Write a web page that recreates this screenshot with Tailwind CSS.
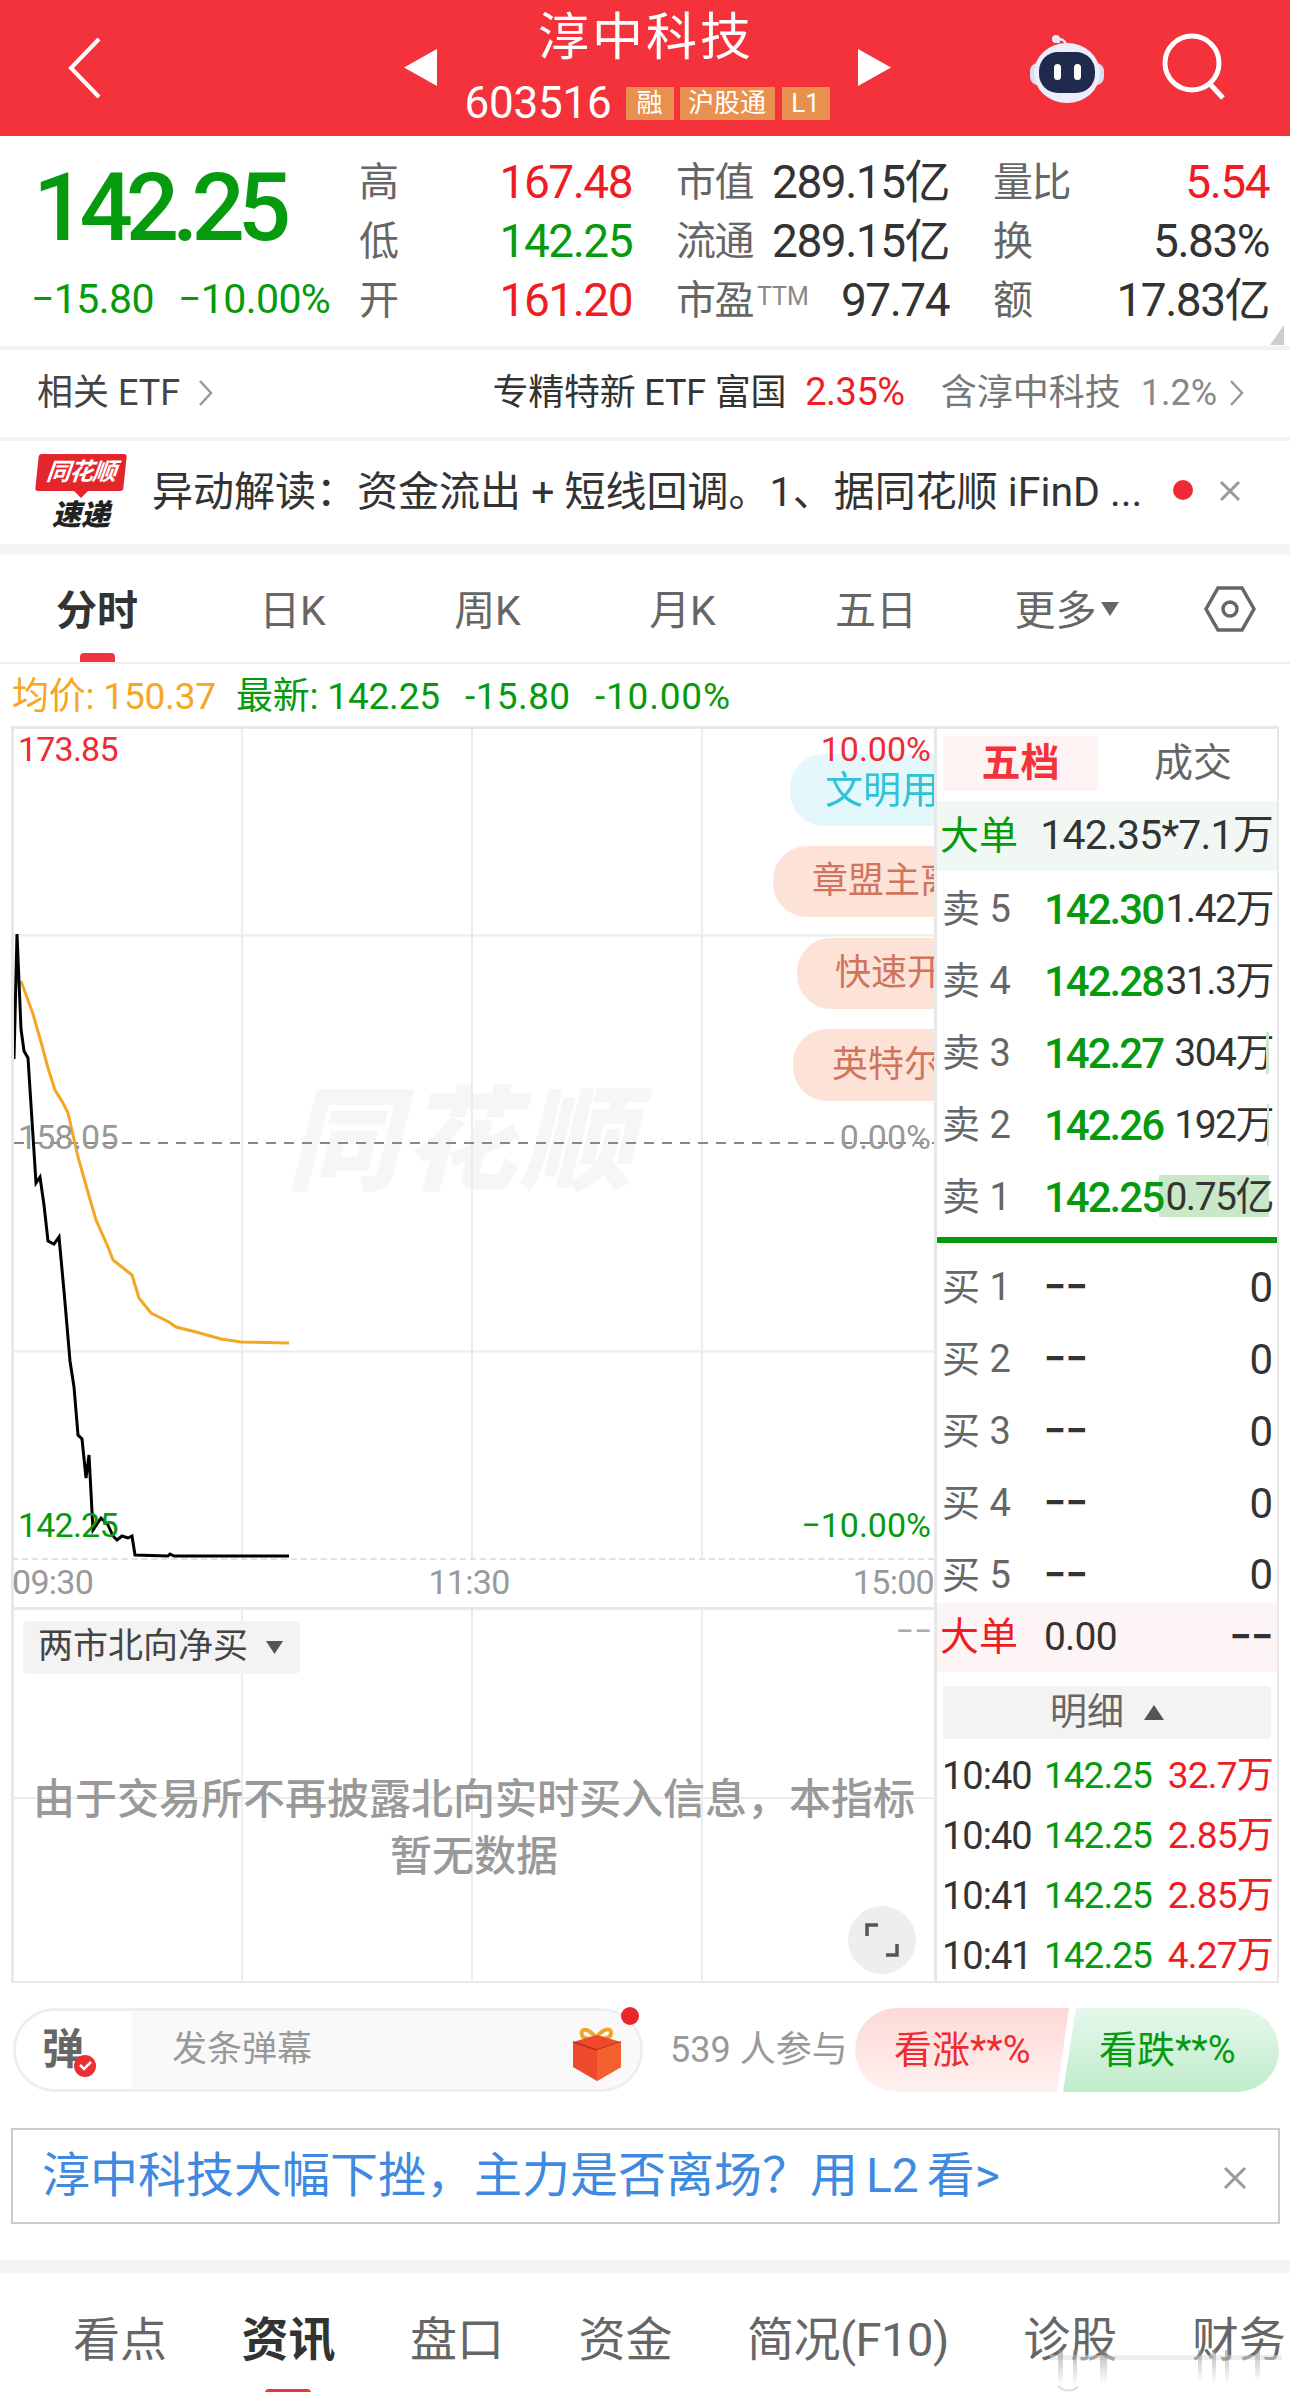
<!DOCTYPE html>
<html lang="zh">
<head>
    <meta charset="UTF-8">
    <meta name="viewport" content="width=device-width, initial-scale=1.0">
    <title>淳中科技</title>
    <script src="https://cdn.jsdelivr.net/npm/@tailwindcss/browser@4"></script>
</head>
<body class="relative w-[1290px] h-[2405px] overflow-hidden bg-white text-[#333] font-['Roboto','Noto_Sans_CJK_SC',sans-serif]">

    <!-- 顶栏 -->
    <header class="relative h-[136px] bg-[#f4323c] text-white flex items-center justify-between pl-[66px] pr-[66px]">
        <svg class="w-[36px] h-[62px]" viewBox="0 0 36 62" fill="none" stroke="#fff" stroke-width="4"><path d="M33 2 L5 31 L33 60"/></svg>
        <div class="absolute left-[404px] w-[487px] top-[8px] flex flex-col items-center">
            <div class="text-[51px] leading-[60px] tracking-[3px] -ml-[3px]">淳中科技</div>
            <div class="flex items-center h-[40px] mt-[15px] -ml-[1px]">
                <span class="text-[44px] leading-[40px] mr-[14px] tracking-[-0.2px]">603516</span>
                <span class="h-[33px] w-[48px] bg-[#e8914e] text-[26px] leading-[33px] text-center mr-[6px]">融</span>
                <span class="h-[33px] w-[95px] bg-[#e8914e] text-[26px] leading-[33px] text-center mr-[7px]">沪股通</span>
                <span class="h-[33px] w-[48px] bg-[#e8914e] text-[26px] leading-[33px] text-center">L1</span>
            </div>
            <svg class="absolute left-0 top-[41px] w-[33px] h-[37px]" viewBox="0 0 33 37" fill="#fff"><path d="M33 0V37L0 18.5Z"/></svg>
            <svg class="absolute right-0 top-[41px] w-[33px] h-[37px]" viewBox="0 0 33 37" fill="#fff"><path d="M0 0V37L33 18.5Z"/></svg>
        </div>
        <div class="flex items-center gap-[57px] -mr-[4px]">
            <svg class="w-[76px] h-[70px] -ml-[6px]" viewBox="0 0 76 70">
                <path d="M29 10 C30 5 34 5 37 11" fill="none" stroke="#e7e9f8" stroke-width="2.5"/>
                <circle cx="27" cy="6" r="4" fill="#e7e9f8"/>
                <rect x="1" y="30" width="74" height="22" rx="8" fill="#d9dcf3"/>
                <ellipse cx="38" cy="40" rx="33" ry="30" fill="#eceefb"/>
                <rect x="10" y="19" width="56" height="41" rx="19" fill="#1f2a4d"/>
                <rect x="25" y="31" width="7" height="16" rx="3.5" fill="#fff"/>
                <rect x="45" y="31" width="7" height="16" rx="3.5" fill="#fff"/>
            </svg>
            <svg class="w-[66px] h-[72px]" viewBox="0 0 66 72" fill="none" stroke="#fff" stroke-width="5"><circle cx="30" cy="31" r="27"/><path d="M48 52 L61 66"/></svg>
        </div>
    </header>

    <!-- 行情 -->
    <section class="relative h-[210px] flex">
        <div class="w-[359px] shrink-0 pl-[33px]">
            <div class="text-[#069a0e] text-[94px] leading-[88px] font-medium tracking-[-7px] mt-[28px]">142.25</div>
            <div class="flex text-[#069a0e] text-[41px] leading-[44px] mt-[25px] -ml-[2px] tracking-[-0.6px]">
                <span class="w-[147px]">−15.80</span><span>−10.00%</span>
            </div>
        </div>
        <div class="grid grid-cols-[273px_273px_276px] gap-x-[44px] grid-rows-[59px_59px_59px] text-[46px] tracking-[-1.5px] mt-[17px] leading-[59px]">
            <div class="flex justify-between"><span class="text-[40px] text-[#666]">高</span><span class="text-[#ef1c24]">167.48</span></div>
            <div class="flex justify-between"><span class="text-[40px] text-[#666]">市值</span><span>289.15亿</span></div>
            <div class="flex justify-between"><span class="text-[40px] text-[#666]">量比</span><span class="text-[#ef1c24]">5.54</span></div>
            <div class="flex justify-between"><span class="text-[40px] text-[#666]">低</span><span class="text-[#069a0e]">142.25</span></div>
            <div class="flex justify-between"><span class="text-[40px] text-[#666]">流通</span><span>289.15亿</span></div>
            <div class="flex justify-between"><span class="text-[40px] text-[#666]">换</span><span>5.83%</span></div>
            <div class="flex justify-between"><span class="text-[40px] text-[#666]">开</span><span class="text-[#ef1c24]">161.20</span></div>
            <div class="flex justify-between"><span class="text-[40px] text-[#666]">市盈<span class="text-[25px] text-[#888] align-[9px] ml-[4px] leading-none tracking-[0px]">TTM</span></span><span>97.74</span></div>
            <div class="flex justify-between"><span class="text-[40px] text-[#666]">额</span><span>17.83亿</span></div>
        </div>
        <svg class="absolute right-[6px] bottom-[1px] w-[14px] h-[20px]" viewBox="0 0 14 20" fill="#ccc"><path d="M14 0V20H0Z"/></svg>
    </section>

    <!-- 相关ETF -->
    <section class="h-[91px] border-t-4 border-[#f2f2f2] flex items-center pl-[37px] pr-[46px] text-[36px] pb-[2px]">
        <span class="text-[#444]">相关 ETF</span>
        <svg class="ml-[18px] w-[15px] h-[28px]" viewBox="0 0 15 28" fill="none" stroke="#999" stroke-width="2.5"><path d="M2 2 L13 14 L2 26"/></svg>
        <span class="ml-auto text-[#333] tracking-[-0.2px]">专精特新 ETF 富国</span>
        <span class="ml-[19px] text-[#ef1c24] text-[38px] tracking-[-0.5px]">2.35%</span>
        <span class="ml-[36px] text-[#777]">含淳中科技</span>
        <span class="ml-[20px] text-[#888]">1.2%</span>
        <svg class="ml-[12px] w-[15px] h-[28px]" viewBox="0 0 15 28" fill="none" stroke="#999" stroke-width="2.5"><path d="M2 2 L13 14 L2 26"/></svg>
    </section>

    <!-- 异动解读 -->
    <section class="h-[107px] border-t-4 border-[#f2f2f2] flex items-center pl-[37px] relative">
        <div class="w-[88px] h-[78px] relative shrink-0">
            <div class="h-[37px] bg-[#e3262c] rounded-[3px] -skew-x-6 text-white text-[24px] leading-[37px] font-bold italic text-center tracking-[-1px]">同花顺</div>
            <div class="absolute left-[36px] top-[36px] w-0 h-0 border-l-[8px] border-r-[8px] border-t-[8px] border-l-transparent border-r-transparent border-t-[#e3262c]"></div>
            <div class="text-[29px] leading-[36px] mt-[6px] font-black italic text-[#222] text-center">速递</div>
        </div>
        <div class="ml-[27px] text-[41px] text-[#333] whitespace-nowrap">异动解读：资金流出 + 短线回调。1、据同花顺 iFinD<span class="ml-[10px]">...</span></div>
        <div class="absolute left-[1173px] top-[39px] w-[20px] h-[20px] rounded-full bg-[#ef2b33]"></div>
        <svg class="absolute left-[1219px] top-[39px] w-[22px] h-[22px]" viewBox="0 0 22 22" fill="none" stroke="#999" stroke-width="3"><path d="M2 2L20 20M20 2L2 20"/></svg>
    </section>

    <!-- 分时 tabs -->
    <nav class="h-[120px] border-t-[11px] border-[#f5f5f5] border-b-2 border-b-[#eee] flex relative text-[41px] text-[#666] pt-[25px]">
        <div class="w-[194px] text-center font-bold text-[#333] leading-[62px]">分时</div>
        <div class="w-[197px] text-center leading-[62px]">日K</div>
        <div class="w-[193px] text-center leading-[62px]">周K</div>
        <div class="w-[197px] text-center leading-[62px]">月K</div>
        <div class="w-[190px] text-center leading-[62px]">五日</div>
        <div class="w-[191px] h-[62px] leading-[62px] flex items-center justify-center">更多<svg class="w-[18px] h-[14px] ml-[4px] mb-[4px]" viewBox="0 0 18 14" fill="#666"><path d="M0 0H18L9 14Z"/></svg></div>
        <svg class="absolute left-[1204px] top-[30px] w-[52px] h-[48px]" viewBox="0 0 52 48" fill="none" stroke="#666" stroke-width="3.5"><path d="M14 3H38L50 24L38 45H14L2 24Z"/><circle cx="26" cy="24" r="7"/></svg>
        <div class="absolute left-[80px] bottom-0 w-[35px] h-[9px] bg-[#f4323c] rounded-t-[4px]"></div>
    </nav>

    <!-- 均价 -->
    <div class="h-[62px] flex items-center pl-[12px] pt-[4px] text-[37px] text-[#069a0e] whitespace-nowrap tracking-[-0.2px]">
        <span class="text-[#f5a623] w-[224px]">均价: 150.37</span>
        <span class="w-[229px]">最新: 142.25</span>
        <span class="w-[130px] tracking-[0.4px]">-15.80</span>
        <span class="tracking-[0.8px]">-10.00%</span>
    </div>

    <!-- 图表 + 盘口 -->
    <main class="ml-[11px] w-[1268px] h-[1257px] flex border-t-[3px] border-b-2 border-[#e8e8e8] border-r-2">
        <div class="w-[923px] shrink-0 flex flex-col border-l-[3px] border-[#e8e8e8]">
            <div class="relative h-[829px] overflow-hidden">
                <div class="absolute left-[272px] top-[349px] text-[113px] leading-[130px] font-black italic text-[#f6f6f6] tracking-[4px] whitespace-nowrap">同花顺</div>
                <svg class="absolute left-0 top-0" width="923" height="829" viewBox="13 728 923 829" fill="none">
                    <path d="M241 728V1557M471 728V1557M701 728V1557M13 934.5H934M13 1350.5H934" stroke="#ececec" stroke-width="2"/>
                    <path d="M13 1142H934" stroke="#888" stroke-width="2" stroke-dasharray="10 8"/>
                    <polyline stroke="#f5a623" stroke-width="3" points="20,980 32,1013 40,1041 47,1067 54,1089 62,1102 67,1112 77,1156 88,1195 95,1219 107,1246 112,1259 131,1274 138,1297 150,1312 168,1321 175,1326 195,1331 220,1338 240,1341 288,1342"/>
                    <polyline stroke="#000" stroke-width="3" points="13,1058 16,933 20,1028 23,1050 27,1057 30,1104 35,1182 39,1176 43,1204 47,1240 53,1243 58,1236 63,1290 69,1360 73,1386 77,1434 81,1438 85,1477 88,1454 92,1529 100,1517 107,1524 112,1535 116,1539 121,1535 127,1537 131,1535 134,1554 167,1555 169,1553 173,1555 288,1555"/>
                </svg>
                <div class="absolute left-[4px] top-[1px] text-[34px] leading-[38px] text-[#ef2b33] tracking-[-0.8px]">173.85</div>
                <div class="absolute right-[3px] top-[1px] text-[34px] leading-[38px] text-[#ef2b33] z-10">10.00%</div>
                <div class="absolute left-[4px] top-[389px] text-[34px] leading-[38px] text-[#999] tracking-[-0.8px]">158.05</div>
                <div class="absolute right-[3px] top-[389px] text-[34px] leading-[38px] text-[#999]">0.00%</div>
                <div class="absolute left-[4px] top-[777px] text-[34px] leading-[38px] text-[#069a0e] tracking-[-0.8px]">142.25</div>
                <div class="absolute right-[3px] top-[777px] text-[34px] leading-[38px] text-[#069a0e]">−10.00%</div>
                <div class="absolute left-[776px] top-[25px] w-[160px] h-[72px] bg-[#e4f8fb] rounded-l-[34px] pl-[35px] text-[38px] leading-[72px] text-[#2cc3d8] whitespace-nowrap overflow-hidden">文明用语</div>
                <div class="absolute left-[759px] top-[117px] w-[175px] h-[71px] bg-[#fde3d7] rounded-l-[34px] pl-[39px] text-[36px] leading-[71px] text-[#d0755c] whitespace-nowrap overflow-hidden">章盟主离场</div>
                <div class="absolute left-[783px] top-[209px] w-[151px] h-[71px] bg-[#fde3d7] rounded-l-[34px] pl-[38px] text-[36px] leading-[71px] text-[#d0755c] whitespace-nowrap overflow-hidden">快速开板</div>
                <div class="absolute left-[779px] top-[300px] w-[155px] h-[72px] bg-[#fde3d7] rounded-l-[34px] pl-[39px] text-[36px] leading-[72px] text-[#d0755c] whitespace-nowrap overflow-hidden">英特尔的</div>
            </div>
            <div class="h-[49px] border-t-2 border-dashed border-[#e3e3d8] flex justify-between items-center text-[34px] text-[#999] tracking-[-0.7px] -ml-[2px] pb-[3px]">
                <span>09:30</span><span class="-ml-[8px]">11:30</span><span>15:00</span>
            </div>
            <div class="relative flex-1 border-t-[3px] border-[#e8e8e8] overflow-hidden">
                <svg class="absolute left-0 top-0" width="923" height="375" viewBox="13 1607 923 375" fill="none">
                    <path d="M241 1607V1982M471 1607V1982M701 1607V1982M13 1795H934" stroke="#ececec" stroke-width="2"/>
                </svg>
                <div class="absolute left-[9px] top-[11px] h-[53px] w-[277px] bg-[#f3f3f3] rounded-[5px] flex items-center pl-[15px] text-[35px] text-[#444]">两市北向净买<svg class="ml-[18px] w-[17px] h-[13px]" viewBox="0 0 17 13" fill="#555"><path d="M0 0H17L8.5 13Z"/></svg></div>
                <div class="absolute right-[2px] top-[2px] text-[32px] leading-[38px] text-[#aaa]">−−</div>
                <div class="absolute left-0 right-0 top-[161px] text-center text-[42px] leading-[57px] text-[#999] font-medium whitespace-nowrap">由于交易所不再披露北向实时买入信息，本指标<br>暂无数据</div>
                <div class="absolute left-[834px] top-[296px] w-[68px] h-[68px] rounded-full bg-[#eee] flex items-center justify-center">
                    <svg class="w-[34px] h-[34px]" viewBox="0 0 34 34" fill="none" stroke="#555" stroke-width="3.5"><path d="M2 13V2H13M32 21V32H21"/></svg>
                </div>
            </div>
        </div>

        <!-- 五档 -->
        <aside class="flex-1 border-l-[3px] border-[#e8e8e8] overflow-hidden text-[39px] whitespace-nowrap">
            <div class="h-[55px] mt-[7px] flex items-center">
                <div class="ml-[6px] w-[155px] shrink-0 h-[55px] bg-[#fdf3f2] rounded-[4px] text-center leading-[55px] font-bold text-[#f4323c]">五档</div>
                <div class="w-[190px] shrink-0 text-center text-[#666]">成交</div>
            </div>
            <div class="h-[70px] mt-[10px] bg-[#f1f8f3] flex items-center pl-[3px] pr-[4px]"><span class="w-[104px] text-[#069a0e]">大单</span><span class="ml-auto tracking-[-0.8px] text-[#333] text-[41px]">142.35*7.1万</span></div>
            <div class="h-[72px] mt-[2px] flex items-center pl-[5px] pr-[4px]"><span class="w-[102px] text-[38px] text-[#666]">卖 5</span><span class="text-[#069a0e] text-[42px] font-medium tracking-[-2px]">142.30</span><span class="ml-auto tracking-[-1.5px] text-[#333]">1.42万</span></div>
            <div class="h-[72px] flex items-center pl-[5px] pr-[4px]"><span class="w-[102px] text-[38px] text-[#666]">卖 4</span><span class="text-[#069a0e] text-[42px] font-medium tracking-[-2px]">142.28</span><span class="ml-auto tracking-[-1.5px] text-[#333]">31.3万</span></div>
            <div class="h-[72px] flex items-center pl-[5px] pr-[4px] relative"><span class="w-[102px] text-[38px] text-[#666]">卖 3</span><span class="text-[#069a0e] text-[42px] font-medium tracking-[-2px]">142.27</span><span class="ml-auto tracking-[-1.5px] text-[#333]">304万</span><div class="absolute right-[8px] top-[15px] w-[3px] h-[42px] bg-[#c8e8c8]"></div></div>
            <div class="h-[72px] flex items-center pl-[5px] pr-[4px] relative"><span class="w-[102px] text-[38px] text-[#666]">卖 2</span><span class="text-[#069a0e] text-[42px] font-medium tracking-[-2px]">142.26</span><span class="ml-auto tracking-[-1.5px] text-[#333]">192万</span><div class="absolute right-[8px] top-[15px] w-[2px] h-[42px] bg-[#c8e8c8]"></div></div>
            <div class="h-[72px] flex items-center pl-[5px] pr-[4px] relative"><span class="w-[102px] text-[38px] text-[#666]">卖 1</span><span class="text-[#069a0e] text-[42px] font-medium tracking-[-2px] relative z-10">142.25</span><span class="ml-auto tracking-[-1.5px] text-[#333] relative z-10">0.75亿</span><div class="absolute right-[8px] top-[14px] w-[110px] h-[42px] bg-[#c8e8c8]"></div></div>
            <div class="h-[6px] mt-[4px] bg-[#069a0e]"></div>
            <div class="h-[72px] mt-[8px] flex items-center pl-[5px] pr-[4px]"><span class="w-[102px] text-[38px] text-[#666]">买 1</span><span class="font-bold">−−</span><span class="ml-auto text-[42px]">0</span></div>
            <div class="h-[72px] flex items-center pl-[5px] pr-[4px]"><span class="w-[102px] text-[38px] text-[#666]">买 2</span><span class="font-bold">−−</span><span class="ml-auto text-[42px]">0</span></div>
            <div class="h-[72px] flex items-center pl-[5px] pr-[4px]"><span class="w-[102px] text-[38px] text-[#666]">买 3</span><span class="font-bold">−−</span><span class="ml-auto text-[42px]">0</span></div>
            <div class="h-[72px] flex items-center pl-[5px] pr-[4px]"><span class="w-[102px] text-[38px] text-[#666]">买 4</span><span class="font-bold">−−</span><span class="ml-auto text-[42px]">0</span></div>
            <div class="h-[64px] flex items-start pl-[5px] pr-[4px] leading-[72px]"><span class="w-[102px] text-[38px] text-[#666]">买 5</span><span class="font-bold">−−</span><span class="ml-auto text-[42px]">0</span></div>
            <div class="h-[69px] bg-[#fdf5f5] flex items-center pl-[3px] pr-[4px]"><span class="w-[104px] text-[#ef1c24]">大单</span><span class="tracking-[-0.8px]">0.00</span><span class="ml-auto font-bold">−−</span></div>
            <div class="h-[53px] mt-[14px] mx-[6px] bg-[#f3f3f3] rounded-[3px] flex items-center justify-center text-[37px] text-[#666]">明细<svg class="ml-[20px] w-[20px] h-[15px]" viewBox="0 0 20 15" fill="#555"><path d="M0 15H20L10 0Z"/></svg></div>
            <div class="h-[60px] mt-[7px] flex items-center pl-[5px] pr-[4px] text-[37px] tracking-[-0.8px]"><span class="w-[102px] text-[38px] tracking-[-1px]">10:40</span><span class="text-[#069a0e] tracking-[-1px]">142.25</span><span class="ml-auto text-[#ef1c24]">32.7万</span></div>
            <div class="h-[60px] flex items-center pl-[5px] pr-[4px] text-[37px] tracking-[-0.8px]"><span class="w-[102px] text-[38px] tracking-[-1px]">10:40</span><span class="text-[#069a0e] tracking-[-1px]">142.25</span><span class="ml-auto text-[#ef1c24]">2.85万</span></div>
            <div class="h-[60px] flex items-center pl-[5px] pr-[4px] text-[37px] tracking-[-0.8px]"><span class="w-[102px] text-[38px] tracking-[-1px]">10:41</span><span class="text-[#069a0e] tracking-[-1px]">142.25</span><span class="ml-auto text-[#ef1c24]">2.85万</span></div>
            <div class="h-[60px] flex items-center pl-[5px] pr-[4px] text-[37px] tracking-[-0.8px]"><span class="w-[102px] text-[38px] tracking-[-1px]">10:41</span><span class="text-[#069a0e] tracking-[-1px]">142.25</span><span class="ml-auto text-[#ef1c24]">4.27万</span></div>
        </aside>
    </main>

    <!-- 弹幕 -->
    <section class="h-[84px] mt-[25px] flex items-center relative">
        <div class="ml-[13px] w-[630px] h-[84px] border-[3px] border-[#eee] rounded-full overflow-hidden flex relative">
            <div class="w-[116px] shrink-0 bg-white pl-[26px] text-[42px] font-bold text-[#666] leading-[78px]">弹</div>
            <div class="flex-1 bg-[#f9f9f9] pl-[40px] text-[35px] text-[#999] leading-[78px]">发条弹幕</div>
            <svg class="absolute left-[556px] top-[16px] w-[50px] h-[54px]" viewBox="0 0 50 54">
                <path d="M24 11C16 0 8 1 10 8C11 12 18 12 24 11C31 1 40 0 39 7C38 12 30 12 24 11Z" fill="none" stroke="#eea52d" stroke-width="4"/>
                <path d="M1 15L25 8L49 15V40L25 54L1 40Z" fill="#ec4a2b"/>
                <path d="M1 15L25 23L49 15" fill="none" stroke="#b5301c" stroke-width="1.5"/>
                <path d="M25 23V54L49 40V15Z" fill="#f4612f"/>
            </svg>
        </div>
        <div class="absolute left-[74px] top-[47px] w-[22px] h-[22px] rounded-full bg-[#ec2f32] flex items-center justify-center">
            <svg class="w-[13px] h-[10px]" viewBox="0 0 13 10" fill="none" stroke="#fff" stroke-width="2.5"><path d="M1 4L5 8L12 1"/></svg>
        </div>
        <div class="absolute left-[621px] top-[-1px] w-[18px] h-[18px] rounded-full bg-[#e8262c]"></div>
        <div class="ml-[27px] text-[36px] text-[#999] whitespace-nowrap">539 人参与</div>
        <div class="absolute left-[855px] top-0 w-[424px] h-[84px]">
            <svg class="absolute left-0 top-0" width="424" height="84" viewBox="0 0 424 84">
                <defs>
                    <linearGradient id="upFill" x1="0" y1="0" x2="0" y2="1"><stop offset="0" stop-color="#fdd9d6"/><stop offset="1" stop-color="#fef2f0"/></linearGradient>
                    <linearGradient id="downFill" x1="0" y1="0" x2="0" y2="1"><stop offset="0" stop-color="#e6f8ec"/><stop offset="1" stop-color="#bfeccb"/></linearGradient>
                </defs>
                <path d="M42 0H214L202 84H42A42 42 0 0 1 42 0Z" fill="url(#upFill)"/>
                <path d="M221 0H382A42 42 0 0 1 382 84H208Z" fill="url(#downFill)"/>
            </svg>
            <div class="absolute left-[39px] top-0 leading-[84px] text-[38px] text-[#ef2b33] whitespace-nowrap">看涨**%</div>
            <div class="absolute left-[244px] top-0 leading-[84px] text-[38px] text-[#069a0e] whitespace-nowrap">看跌**%</div>
        </div>
    </section>

    <!-- L2 -->
    <section class="h-[96px] mt-[36px] ml-[11px] w-[1269px] border-2 border-[#ccc] flex items-center pl-[29px] relative">
        <div class="text-[48px] text-[#3f8ae0] whitespace-nowrap">淳中科技大幅下挫，主力是否离场？用<span class="ml-[8px] mr-[8px]">L2</span>看&gt;</div>
        <svg class="absolute right-[31px] top-[36px] w-[24px] h-[24px]" viewBox="0 0 24 24" fill="none" stroke="#999" stroke-width="3"><path d="M2 2L22 22M22 2L2 22"/></svg>
    </section>

    <!-- 底部 tabs -->
    <nav class="mt-[36px] h-[132px] border-t-[13px] border-[#f5f5f5] flex gap-[74.5px] pl-[73px] text-[47px] text-[#666] leading-[66px] pt-[34px] relative whitespace-nowrap overflow-hidden">
        <span>看点</span>
        <span class="font-bold text-[#333]">资讯</span>
        <span>盘口</span>
        <span>资金</span>
        <span class="tracking-[-0.5px]">简况(F10)</span>
        <span>诊股</span>
        <span>财务</span>
        <div class="absolute left-[265px] top-[116px] w-[46px] h-[8px] bg-[#f4323c] rounded-[4px]"></div>
    </nav>

    <!-- 图片水印 -->
    <svg class="absolute left-[1040px] top-[2350px] pointer-events-none" width="250" height="50" viewBox="0 0 250 50">
        <defs>
            <linearGradient id="markFade" x1="0" y1="0" x2="0" y2="1"><stop offset="0" stop-color="#888" stop-opacity="0.55"/><stop offset="1" stop-color="#888" stop-opacity="0"/></linearGradient>
        </defs>
        <rect x="10" y="5" width="232" height="5" fill="#ddd" opacity="0.5"/>
        <g fill="url(#markFade)">
            <rect x="18" y="0" width="5" height="36"/>
            <rect x="33" y="0" width="4" height="36"/>
            <rect x="60" y="0" width="7" height="34"/>
            <rect x="158" y="0" width="4" height="32"/>
            <rect x="172" y="0" width="4" height="34"/>
            <rect x="185" y="0" width="4" height="34"/>
            <rect x="215" y="0" width="5" height="32"/>
        </g>
        <path d="M18 36C24 42 34 42 38 36" fill="none" stroke="#ddd" stroke-width="2"/>
    </svg>
</body>
</html>
